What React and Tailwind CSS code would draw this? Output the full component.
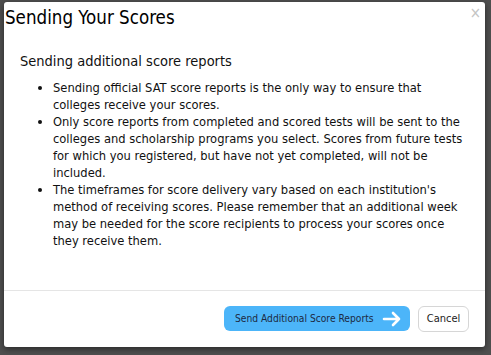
export default function App() {
  const body = { fontFamily: '"DejaVu Sans Condensed", "DejaVu Sans", sans-serif' };
  return (
    <div className="w-[491px] h-[355px] bg-[#4f4f4f] relative overflow-hidden" style={body}>
      <div className="absolute left-[4px] top-[2px] w-[481px] h-[345px] bg-white rounded-[3px] shadow-[0_2px_6px_rgba(0,0,0,0.5)] flex flex-col">
        <div className="relative h-[40px]">
          <div className="pl-[1px] pt-[3px] text-[18.6px] leading-[26px] text-black">Sending Your Scores</div>
          <div className="absolute right-[4px] top-[4px] text-[15px] leading-[15px] text-[#c4c4c4]">×</div>
        </div>
        <div className="flex-1 pl-[16px] pt-[9px]">
          <div className="text-[14.5px] leading-[20px] text-[#111]">Sending additional score reports</div>
          <ul className="mt-[8px] pl-[33px] text-[12.8px] leading-[17px] text-[#111] list-disc">
            <li>Sending official SAT score reports is the only way to ensure that<br />colleges receive your scores.</li>
            <li>Only score reports from completed and scored tests will be sent to the<br />colleges and scholarship programs you select. Scores from future tests<br />for which you registered, but have not yet completed, will not be<br />included.</li>
            <li>The timeframes for score delivery vary based on each institution's<br />method of receiving scores. Please remember that an additional week<br />may be needed for the score recipients to process your scores once<br />they receive them.</li>
          </ul>
        </div>
        <div className="h-[57px] border-t border-[#e5e5e5] flex items-start justify-end pt-[15px] pr-[16px] gap-[8px]">
          <button className="h-[25px] w-[186px] rounded-[6px] bg-[#4cb5f9] flex items-center pl-[11px] pr-[9px] text-[10.2px] text-[#1c2a44] whitespace-nowrap">
            <span>Send Additional Score Reports</span>
            <svg className="ml-auto" width="19" height="16" viewBox="0 0 19 16" fill="none" stroke="white" strokeWidth="2.6" strokeLinecap="round" strokeLinejoin="round">
              <path d="M2 8h15M11 2l6 6-6 6" />
            </svg>
          </button>
          <button className="h-[26px] w-[51px] rounded-[6px] bg-white border border-[#d6d6d6] text-[11px] text-[#222]">Cancel</button>
        </div>
      </div>
    </div>
  );
}
